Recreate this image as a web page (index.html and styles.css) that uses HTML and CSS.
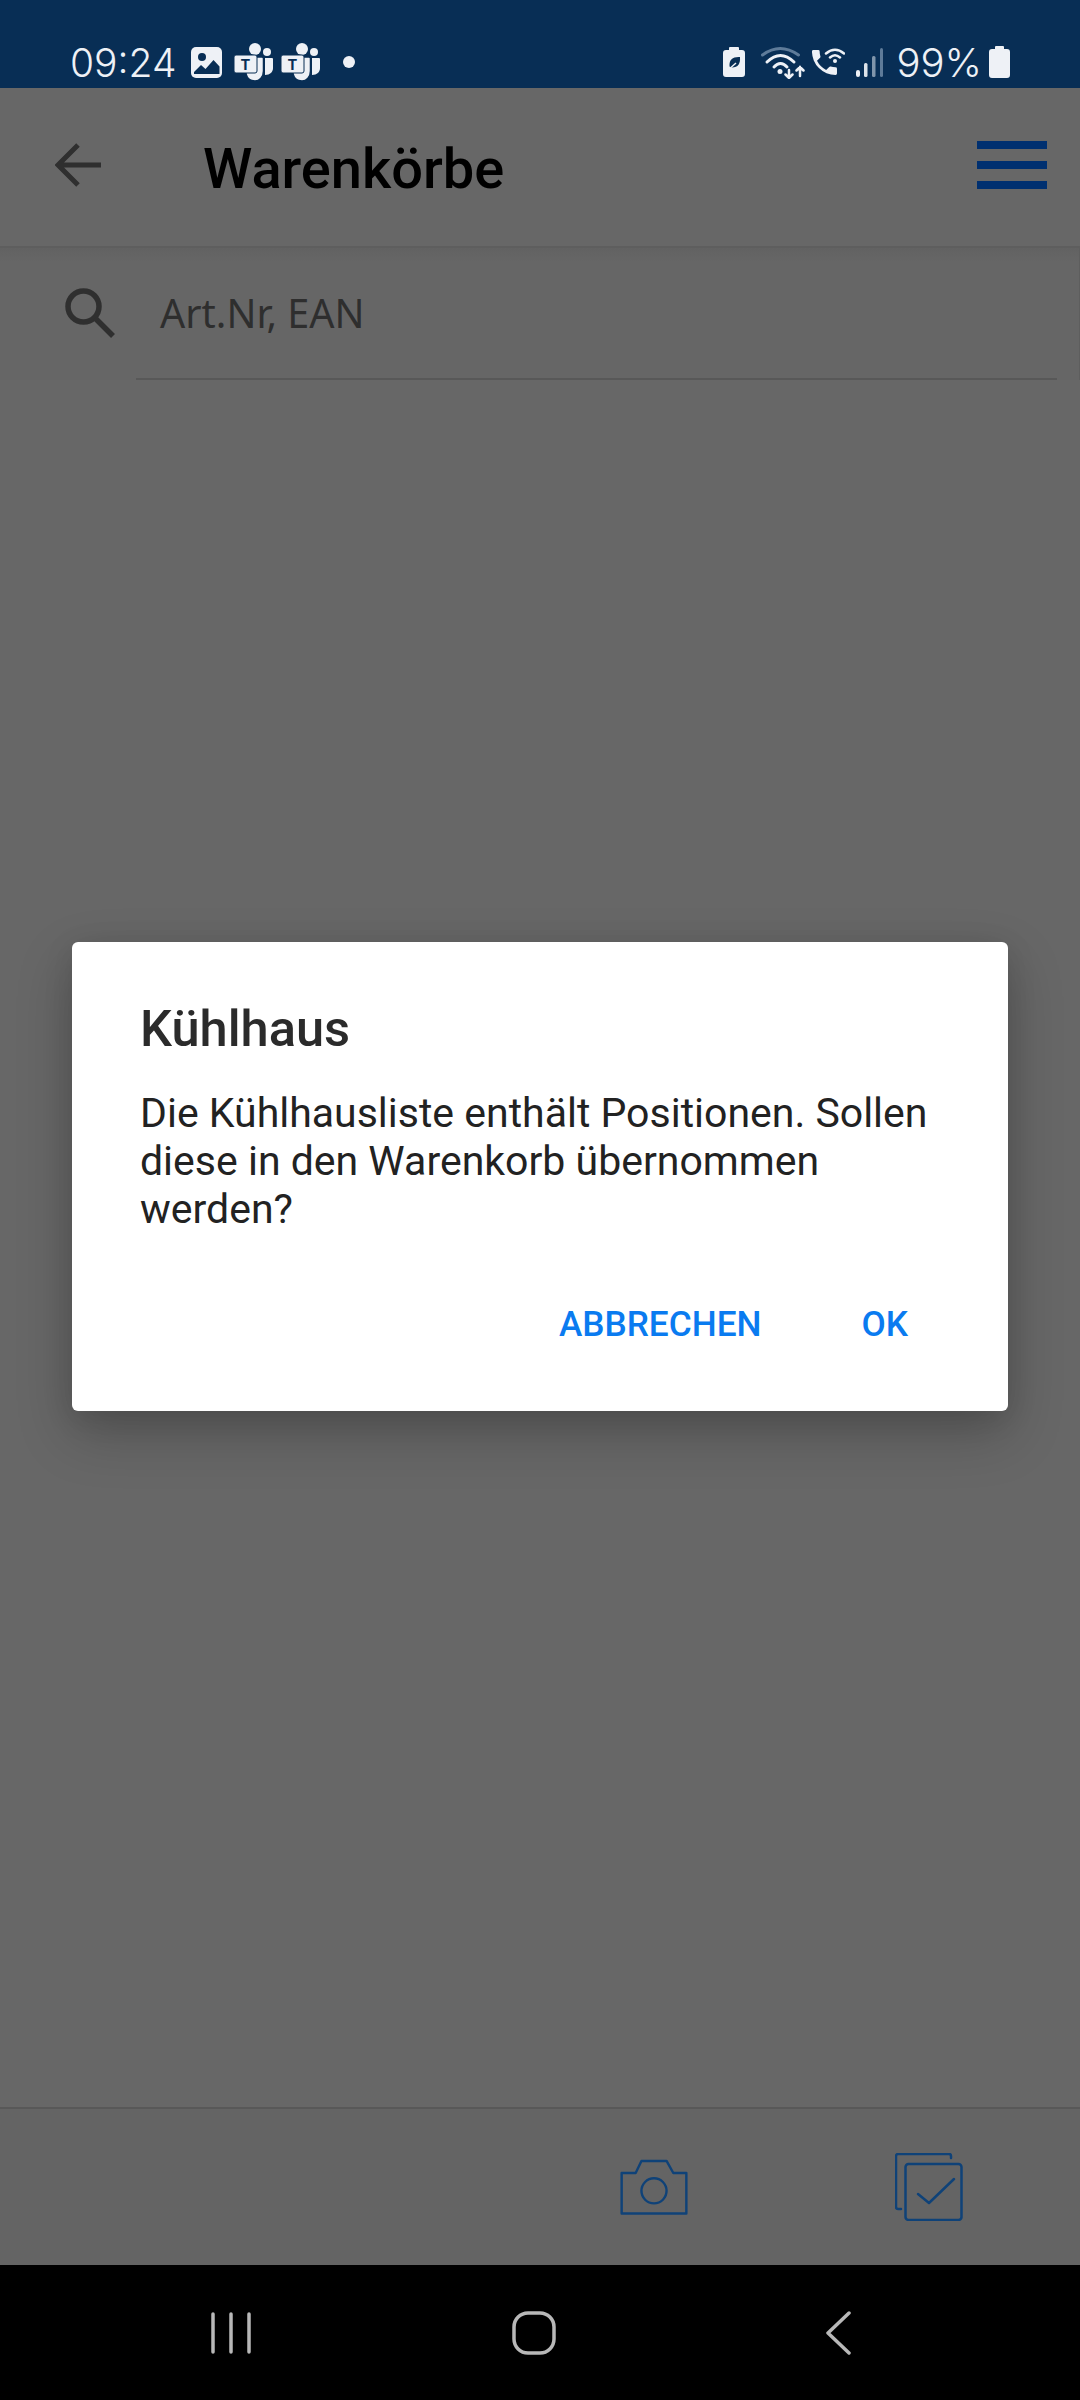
FILE: index.html
```html
<!DOCTYPE html>
<html lang="de">
<head>
  <meta charset="UTF-8" />
  <meta name="viewport" content="width=device-width, initial-scale=1.0"/>
  <title>Warenkörbe</title>
  <link rel="stylesheet" href="styles.css">
</head>
<body>
  <div class="app">
    <div class="status">
      <span class="clock">09:24</span>
      <svg class="ic-gallery" viewBox="0 0 31 31">
        <rect width="31" height="31" rx="5" fill="#eef1f6"/>
        <circle cx="11" cy="10" r="4" fill="#082e55"/>
        <path d="M3 27v-2l7-7 4.500 4 8-9 6 6.500V27z" fill="#082e55"/>
      </svg>
      <svg class="ic-teams" viewBox="0 0 39 38">
        <circle cx="21" cy="6" r="6" fill="#eef1f6"/>
        <circle cx="33" cy="9" r="4" fill="#eef1f6"/>
        <path d="M31 15h7a1 1 0 0 1 1 1v9c0 4-3 7-8 7z" fill="#eef1f6"/>
        <path d="M14 14h14a1.500 1.500 0 0 1 1.500 1.500V28c0 6-4 10-8.500 10s-8-3-9-7z" fill="#eef1f6" stroke="#082e55" stroke-width="1.500"/>
        <rect x="0" y="12" width="23" height="18" rx="2" fill="#eef1f6" stroke="#082e55" stroke-width="1"/>
        <text x="11.500" y="27" class="teams-t">T</text>
      </svg>
      <svg class="ic-teams" viewBox="0 0 39 38">
        <circle cx="21" cy="6" r="6" fill="#eef1f6"/>
        <circle cx="33" cy="9" r="4" fill="#eef1f6"/>
        <path d="M31 15h7a1 1 0 0 1 1 1v9c0 4-3 7-8 7z" fill="#eef1f6"/>
        <path d="M14 14h14a1.500 1.500 0 0 1 1.500 1.500V28c0 6-4 10-8.500 10s-8-3-9-7z" fill="#eef1f6" stroke="#082e55" stroke-width="1.500"/>
        <rect x="0" y="12" width="23" height="18" rx="2" fill="#eef1f6" stroke="#082e55" stroke-width="1"/>
        <text x="11.500" y="27" class="teams-t">T</text>
      </svg>
      <span class="dot"></span>

      <div class="status-right">
        <svg class="ic-leaf" viewBox="0 0 22 30">
          <path d="M7 0h8a1 1 0 0 1 1 1v2h3a3 3 0 0 1 3 3v21a3 3 0 0 1-3 3H3a3 3 0 0 1-3-3V6a3 3 0 0 1 3-3h3V1a1 1 0 0 1 1-1z" fill="#eef1f6"/>
          <path d="M17 10c-7-.5-11 2.500-10.500 9 .2 1 1 1.500 2.500 1.500 6 0 8.500-4 8-10.500z" fill="#082e55"/>
          <path d="M4 24l9-8" stroke="#eef1f6" stroke-width="1.500" fill="none"/>
        </svg>
        <svg class="ic-wifi" viewBox="0 0 45 33" fill="none" stroke-linecap="round">
          <path d="M1.500 9Q19-4 37.500 9" stroke="#5e7b99" stroke-width="3"/>
          <path d="M6 16Q19.500 3 33 16" stroke="#eef1f6" stroke-width="3"/>
          <path d="M13 21Q19.500 14 26 21" stroke="#eef1f6" stroke-width="3"/>
          <circle cx="19" cy="25.500" r="2.500" fill="#eef1f6"/>
          <path d="M28 24v8M24.500 28.500l3.500 3.500 3.500-3.500M39 30v-9M35.500 24.500l3.500-3.500 3.500 3.500" stroke="#eef1f6" stroke-width="2.500"/>
        </svg>
        <svg class="ic-call" viewBox="0 0 33 28" fill="none">
          <path transform="translate(-4.200 -2.200) scale(1.390)" d="M20 15.500c-1.250 0-2.450-.2-3.570-.57a1 1 0 0 0-1.020.24l-2.200 2.200a15 15 0 0 1-6.590-6.590l2.200-2.210a.96.96 0 0 0 .25-1A11.400 11.400 0 0 1 8.500 4a1 1 0 0 0-1-1H4a1 1 0 0 0-1 1 17 17 0 0 0 17 17 1 1 0 0 0 1-1v-3.500a1 1 0 0 0-1-1z" fill="#eef1f6"/>
          <path d="M14 5.500Q23-2 32 5.500M18 9.500Q23 5 28 9.500" stroke="#eef1f6" stroke-width="2.500" stroke-linecap="round"/>
          <circle cx="23" cy="13" r="2" fill="#eef1f6"/>
        </svg>
        <svg class="ic-signal" viewBox="0 0 27 29">
          <rect x="0" y="22" width="4" height="7" rx="2" fill="#eef1f6"/>
          <rect x="8" y="15" width="3.500" height="14" rx="1.500" fill="#dde3ea"/>
          <rect x="16" y="8" width="3.500" height="21" rx="1.500" fill="#8095ab"/>
          <rect x="24" y="0" width="3" height="29" rx="1.500" fill="#5e7b99"/>
        </svg>
        <span class="percent">99%</span>
        <svg class="ic-battery" viewBox="0 0 21 32">
          <path d="M7 0h7a1 1 0 0 1 1 1v2h3a3 3 0 0 1 3 3v23a3 3 0 0 1-3 3H3a3 3 0 0 1-3-3V6a3 3 0 0 1 3-3h3V1a1 1 0 0 1 1-1z" fill="#eef1f6"/>
        </svg>
      </div>
    </div>

    <div class="header">
      <svg class="ic-back" viewBox="0 0 46 44" fill="none" stroke="#2f2f2f" stroke-width="5">
        <path d="M46 22H4M23 2L3 22l20 20"/>
      </svg>
      <h1 class="title">Warenkörbe</h1>
      <div class="burger">
        <span></span>
        <span></span>
        <span></span>
      </div>
    </div>

    <div class="search">
      <div class="search-icon">
        <svg class="ic-search" viewBox="0 0 50 50" fill="none" stroke="#2f2f2f" stroke-width="5.500">
          <circle cx="18.500" cy="18.500" r="15.500"/>
          <path d="M30 30l18 18"/>
        </svg>
      </div>
      <div class="search-field">Art.Nr, EAN</div>
    </div>

    <div class="content"></div>

    <div class="toolbar">
      <svg class="ic-camera" viewBox="0 0 70 58" fill="none" stroke="#0f4278" stroke-width="2.500" stroke-linejoin="round">
        <path d="M1.500 14.500H16L22 2h26l7 12.500h13.500v42H1.500z"/>
        <circle cx="35" cy="33" r="13"/>
      </svg>
      <svg class="ic-check" viewBox="0 0 68 68" fill="none" stroke="#0f4278" stroke-width="2.500" stroke-linecap="round" stroke-linejoin="round">
        <path d="M56 5V3a2 2 0 0 0-2-2H3a2 2 0 0 0-2 2v51a2 2 0 0 0 2 2h3"/>
        <rect x="10.500" y="11" width="56" height="56" rx="3"/>
        <path d="M23 41l11 9 25-24"/>
      </svg>
    </div>

    <div class="nav">
      <svg class="ic-recents" viewBox="0 0 42 42" stroke="#b8b8b8" stroke-width="3.500" stroke-linecap="round">
        <path d="M2 2v38M20 2v38M38 2v38"/>
      </svg>
      <svg class="ic-home" viewBox="0 0 44 44" fill="none" stroke="#b8b8b8" stroke-width="3.500">
        <rect x="2" y="2" width="40" height="40" rx="14"/>
      </svg>
      <svg class="ic-navback" viewBox="0 0 26 44" fill="none" stroke="#b8b8b8" stroke-width="3.500" stroke-linecap="round" stroke-linejoin="round">
        <path d="M24 2L3 22l21 20"/>
      </svg>
    </div>

    <div class="scrim">
      <div class="dialog">
        <h2 class="dialog-title">Kühlhaus</h2>
        <p class="dialog-text">Die Kühlhausliste enthält Positionen. Sollen diese in den Warenkorb übernommen werden?</p>
        <div class="dialog-actions">
          <span class="action">ABBRECHEN</span>
          <span class="action">OK</span>
        </div>
      </div>
    </div>
  </div>
</body>
</html>
```

FILE: styles.css
```css
* {
  box-sizing: border-box;
}

body {
  margin: 0;
  background: #676767;
  font-family: Roboto, sans-serif;
}

.app {
  position: relative;
  display: flex;
  flex-direction: column;
  width: 1080px;
  height: 2400px;
  overflow: hidden;
  background: #676767;
}

/* status bar */
.status {
  display: flex;
  align-items: center;
  height: 88px;
  padding: 36px 70px 0 70px;
  background: #082e55;
  color: #eef1f6;
}

.clock {
  width: 121px;
  font-family: Inter, sans-serif;
  font-size: 39px;
  font-weight: 300;
}

.ic-gallery {
  width: 31px;
  height: 31px;
}

.ic-teams {
  width: 39px;
  height: 38px;
  margin-left: 8px;
}

.ic-gallery + .ic-teams {
  margin-left: 12px;
}

.teams-t {
  font-family: Roboto, sans-serif;
  font-size: 15px;
  font-weight: 700;
  text-anchor: middle;
  fill: #082e55;
}

.dot {
  width: 12px;
  height: 12px;
  margin-left: 23px;
  border-radius: 50%;
  background: #eef1f6;
}

.status-right {
  display: flex;
  align-items: center;
  margin-left: auto;
}

.ic-leaf {
  width: 22px;
  height: 30px;
}

.ic-wifi {
  width: 45px;
  height: 33px;
  margin-left: 16px;
}

.ic-call {
  width: 33px;
  height: 28px;
  margin-left: 6px;
}

.ic-signal {
  width: 27px;
  height: 29px;
  margin-left: 11px;
}

.percent {
  margin-left: 13px;
  font-family: Inter, sans-serif;
  font-size: 40px;
  font-weight: 300;
}

.ic-battery {
  width: 21px;
  height: 32px;
  margin-left: 7px;
}

/* app header */
.header {
  display: flex;
  align-items: center;
  height: 160px;
  padding: 0 33px 4px 55px;
  border-bottom: 2px solid #5e5e5e;
}

.ic-back {
  width: 46px;
  height: 44px;
}

.title {
  margin: 0 0 0 102px;
  padding-top: 8px;
  color: #000;
  font-size: 56px;
  font-weight: 500;
}

.burger {
  display: flex;
  flex-direction: column;
  gap: 12px;
  margin-left: auto;
}

.burger span {
  display: block;
  width: 70px;
  height: 8px;
  background: #003070;
}

/* search */
.search {
  display: flex;
  height: 132px;
  padding-left: 65px;
  border-right: 1px solid #5e5e5e;
  background: linear-gradient(#626262, #666 14px);
}

.search-icon {
  width: 71px;
  padding-top: 40px;
}

.ic-search {
  display: block;
  width: 50px;
  height: 50px;
}

.search-field {
  flex: 1;
  margin-right: 22px;
  padding: 38px 0 0 24px;
  border-bottom: 2px solid #585858;
  color: #2e2e2e;
  font-family: "Noto Sans", sans-serif;
  font-size: 39.500px;
}

.content {
  flex: 1;
}

/* bottom bar */
.toolbar {
  display: flex;
  align-items: center;
  gap: 207px;
  justify-content: flex-end;
  height: 158px;
  padding: 0 117px 0 0;
  border-top: 2px solid #585858;
  background: #646464;
}

.ic-camera {
  width: 68px;
  height: 56px;
}

.ic-check {
  width: 68px;
  height: 68px;
}

/* system navigation */
.nav {
  display: flex;
  align-items: center;
  justify-content: space-between;
  height: 135px;
  padding: 0 229px 0 211px;
  background: #000;
}

.ic-recents {
  width: 42px;
  height: 42px;
}

.ic-home {
  width: 44px;
  height: 44px;
  margin-right: 10px;
}

.ic-navback {
  width: 26px;
  height: 44px;
}

/* dialog, over the page */
.scrim {
  position: absolute;
  top: 88px;
  right: 0;
  bottom: 135px;
  left: 0;
  display: flex;
  align-items: center;
  justify-content: center;
}

.dialog {
  width: 936px;
  height: 469px;
  padding: 58px 68px 0;
  border-radius: 6px;
  background: #fff;
  box-shadow: 0 22px 55px rgba(0, 0, 0, 0.22), 0 6px 30px rgba(0, 0, 0, 0.1);
}

.dialog-title {
  margin: 0;
  color: #2b2b2b;
  font-size: 50.600px;
  font-weight: 500;
  line-height: 58px;
}

.dialog-text {
  margin: 31px 0 0;
  color: #222;
  font-size: 41px;
  line-height: 48px;
}

.dialog-actions {
  display: flex;
  gap: 100px;
  justify-content: flex-end;
  margin-top: 70px;
  padding-right: 32px;
}

.action {
  color: #0a7bf0;
  font-size: 35.200px;
  font-weight: 500;
}
```
